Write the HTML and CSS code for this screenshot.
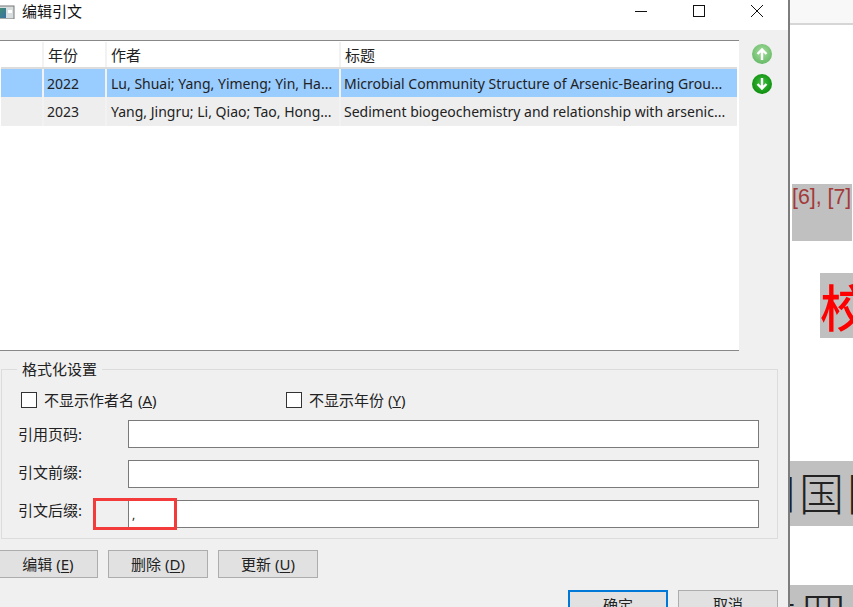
FILE: index.html
```html
<!DOCTYPE html>
<html lang="zh-CN">
<head>
<meta charset="utf-8">
<title>编辑引文</title>
<link rel="stylesheet" href="styles.css">
</head>
<body>
<div class="screen">
  <main class="dialog">
    <header class="titlebar">
      <svg class="app-icon" width="16" height="16" viewBox="0 0 16 16">
        <defs><linearGradient id="appg" x1="0" y1="0" x2="1" y2="1"><stop offset="0" stop-color="#3f8f6f"/><stop offset="1" stop-color="#3a6fa8"/></linearGradient></defs>
        <rect x="0" y="3" width="15" height="13" fill="#d8dde0" stroke="#777" stroke-width="1"/>
        <rect x="0" y="5" width="7" height="10" fill="url(#appg)"/>
        <rect x="9" y="7" width="4" height="3" fill="#fff"/>
      </svg>
      <span class="title">编辑引文</span>
      <div class="window-controls">
        <svg width="12" height="12" viewBox="0 0 12 12"><path d="M0 6.5H12" stroke="#111" fill="none"/></svg>
        <svg width="12" height="12" viewBox="0 0 12 12"><rect x="0.5" y="0.5" width="11" height="11" stroke="#111" fill="none"/></svg>
        <svg width="12" height="12" viewBox="0 0 12 12"><path d="M0 0L12 12M12 0L0 12" stroke="#111" fill="none"/></svg>
      </div>
    </header>

    <div class="body">
      <section class="list-row">
        <div class="list">
          <div class="row row-head">
            <div class="cell"></div><div class="cell">年份</div><div class="cell">作者</div><div class="cell">标题</div>
          </div>
          <div class="row row-selected">
            <div class="cell"></div><div class="cell">2022</div><div class="cell cell-author">Lu, Shuai; Yang, Yimeng; Yin, Ha...</div><div class="cell">Microbial Community Structure of Arsenic-Bearing Grou...</div>
          </div>
          <div class="row row-alt">
            <div class="cell"></div><div class="cell">2023</div><div class="cell cell-author">Yang, Jingru; Li, Qiao; Tao, Hong...</div><div class="cell">Sediment biogeochemistry and relationship with arsenic...</div>
          </div>
        </div>
        <div class="movers">
          <svg class="mover" width="22" height="22" viewBox="0 0 22 22">
            <defs><radialGradient id="gu" cx="50%" cy="40%" r="60%"><stop offset="0" stop-color="#a8dca0"/><stop offset="1" stop-color="#66bb66"/></radialGradient></defs>
            <circle cx="11" cy="11" r="10" fill="url(#gu)"/>
            <path d="M11 17V7M6.5 11L11 6.5L15.5 11" stroke="#fff" stroke-width="2.4" fill="none"/>
          </svg>
          <svg class="mover" width="22" height="22" viewBox="0 0 22 22">
            <defs><radialGradient id="gd" cx="50%" cy="45%" r="60%"><stop offset="0" stop-color="#3fc03f"/><stop offset="1" stop-color="#0a8a0a"/></radialGradient></defs>
            <circle cx="11" cy="11" r="10" fill="url(#gd)"/>
            <path d="M11 5V15M6.5 11L11 15.5L15.5 11" stroke="#fff" stroke-width="2.4" fill="none"/>
          </svg>
        </div>
      </section>

      <fieldset class="format">
        <legend class="format-legend">格式化设置</legend>
        <div class="checks">
          <label class="check check-author"><span class="box"></span>不显示作者名 (<u>A</u>)</label>
          <label class="check"><span class="box"></span>不显示年份 (<u>Y</u>)</label>
        </div>
        <div class="field"><span class="field-label field-label-top">引用页码:</span><div class="input"></div></div>
        <div class="field"><span class="field-label field-label-mid">引文前缀:</span><div class="input"></div></div>
        <div class="field"><span class="field-label field-label-low">引文后缀:</span><div class="input">,</div></div>
      </fieldset>

      <div class="actions">
        <div class="btn">编辑 (<u>E</u>)</div>
        <div class="btn">删除 (<u>D</u>)</div>
        <div class="btn">更新 (<u>U</u>)</div>
      </div>
      <div class="confirm">
        <div class="btn btn-primary">确定</div>
        <div class="btn">取消</div>
      </div>
    </div>
    <div class="callout"></div>
  </main>

  <aside class="document">
    <div class="doc-strip"></div>
    <div class="mark mark-cite">[6], [7]</div>
    <div class="mark mark-red">校</div>
    <div class="mark mark-line">四国国</div>
    <div class="mark mark-last">生罢</div>
  </aside>
</div>
</body>
</html>
```
FILE: styles.css
```css
* { box-sizing: border-box; }
html, body { margin: 0; height: 100%; overflow: hidden; background: #fff; }
body { font-family: "Noto Sans", "Noto Sans CJK SC", sans-serif; font-size: 15px; color: #222; }

.screen { position: relative; display: flex; width: 853px; height: 607px; overflow: hidden; }

.dialog { position: relative; flex: 0 0 790px; height: 607px; background: #f0f0f0; border-right: 2px solid #7d7d7d; display: flex; flex-direction: column; overflow: hidden; }

.titlebar { flex: 0 0 30px; background: #fff; display: flex; align-items: center; }
.app-icon { margin: 0 7px 0 -1px; flex: none; position: relative; top: -4px; }
.title { line-height: 22px; position: relative; top: -4px; color: #111; }
.window-controls { margin-left: auto; display: flex; gap: 46px; padding-right: 25px; position: relative; top: -4px; }

.body { flex: 1; padding-top: 10px; display: flex; flex-direction: column; }

.list-row { display: flex; flex: none; height: 311px; }
.list { width: 739px; background: #fff; border-top: 1px solid #888; border-bottom: 1px solid #888; padding: 0 2px 0 1px; }
.row { display: grid; grid-template-columns: 43px 63px 234px 396px; height: 28px; line-height: 29px; font-size: 14px; }
.row-head { height: 28px; border-bottom: 2px solid #dcdcdc; padding-top: 1px; font-size: 15px; }
.row-selected { background: #99ccff; }
.row-alt { background: #eeeeee; height: 29px; }
.cell { padding-left: 3px; white-space: nowrap; overflow: hidden; border-right: 2px solid #f2f2f2; }
.cell-author { padding-left: 4px; }
.row .cell:last-child { border-right: none; }
.row-head .cell { padding-left: 4px; line-height: 26px; }

.movers { display: flex; flex-direction: column; gap: 8px; margin: 3px 0 0 12px; }
.mover { display: block; }

.format { flex: none; margin: 8px 0 0 1px; width: 777px; height: 180px; padding: 0; border: 1px solid #dcdcdc; position: relative; }
.format-legend { margin-left: 15px; padding: 0 5px; line-height: 20px; }

.checks { display: flex; padding: 12px 0 0 19px; height: 41px; }
.check { display: flex; align-items: center; height: 18px; line-height: 18px; }
.check-author { width: 265px; }
.box { width: 16px; height: 16px; background: #fff; border: 1px solid #333; margin-right: 7px; flex: none; }

.field { display: flex; align-items: flex-start; height: 40px; padding-left: 16px; }
.field-label { flex: 0 0 110px; line-height: 27px; }
.field-label-top { margin-top: 1px; }
.field-label-mid { margin-top: -1px; }
.field-label-low { margin-top: -3px; }
.input { width: 631px; height: 28px; background: #fff; border: 1px solid #7a7a7a; line-height: 28px; padding-left: 3px; font-size: 12px; }

.actions { display: flex; flex: none; gap: 10px; margin: 11px 0 0 -2px; }
.btn { width: 100px; height: 28px; line-height: 26px; text-align: center; background: #e1e1e1; border: 1px solid #adadad; }
.btn u { text-underline-offset: 2px; }
.confirm { display: flex; flex: none; gap: 10px; margin: 12px 0 0 568px; }
.btn-primary { border: 2px solid #0078d7; }

.callout { position: absolute; left: 93px; top: 498px; width: 84px; height: 32px; border: 3px solid #f33b3b; }

.document { position: relative; flex: 1; overflow: hidden; display: flex; flex-direction: column; }
.doc-strip { position: absolute; left: 0; right: 0; top: 0; height: 25px; background: #f8f8f8; border-bottom: 2px solid #d6d6d6; }
.mark { position: absolute; background: #c0c0c0; white-space: nowrap; }
.mark-cite { left: 2px; top: 184px; width: 60px; height: 57px; font-family: "Liberation Sans", sans-serif; font-size: 21.3px; line-height: 26px; color: #a33a3a; }
.mark-red { left: 30px; top: 273px; width: 40px; height: 65px; font-family: "Noto Sans CJK SC", sans-serif; font-size: 50px; line-height: 65px; color: #ff0000; font-weight: 500; }
.mark-line { left: -2px; top: 461px; width: 70px; height: 65px; font-family: "Noto Sans CJK SC", sans-serif; font-size: 45px; font-weight: 300; line-height: 62px; letter-spacing: 3px; color: #222; text-indent: -37px; }
.mark-last { left: 0; top: 585px; width: 70px; height: 30px; font-family: "Noto Sans CJK SC", sans-serif; font-size: 45px; font-weight: 300; line-height: 58px; letter-spacing: 3px; color: #222; text-indent: -37px; }
```
